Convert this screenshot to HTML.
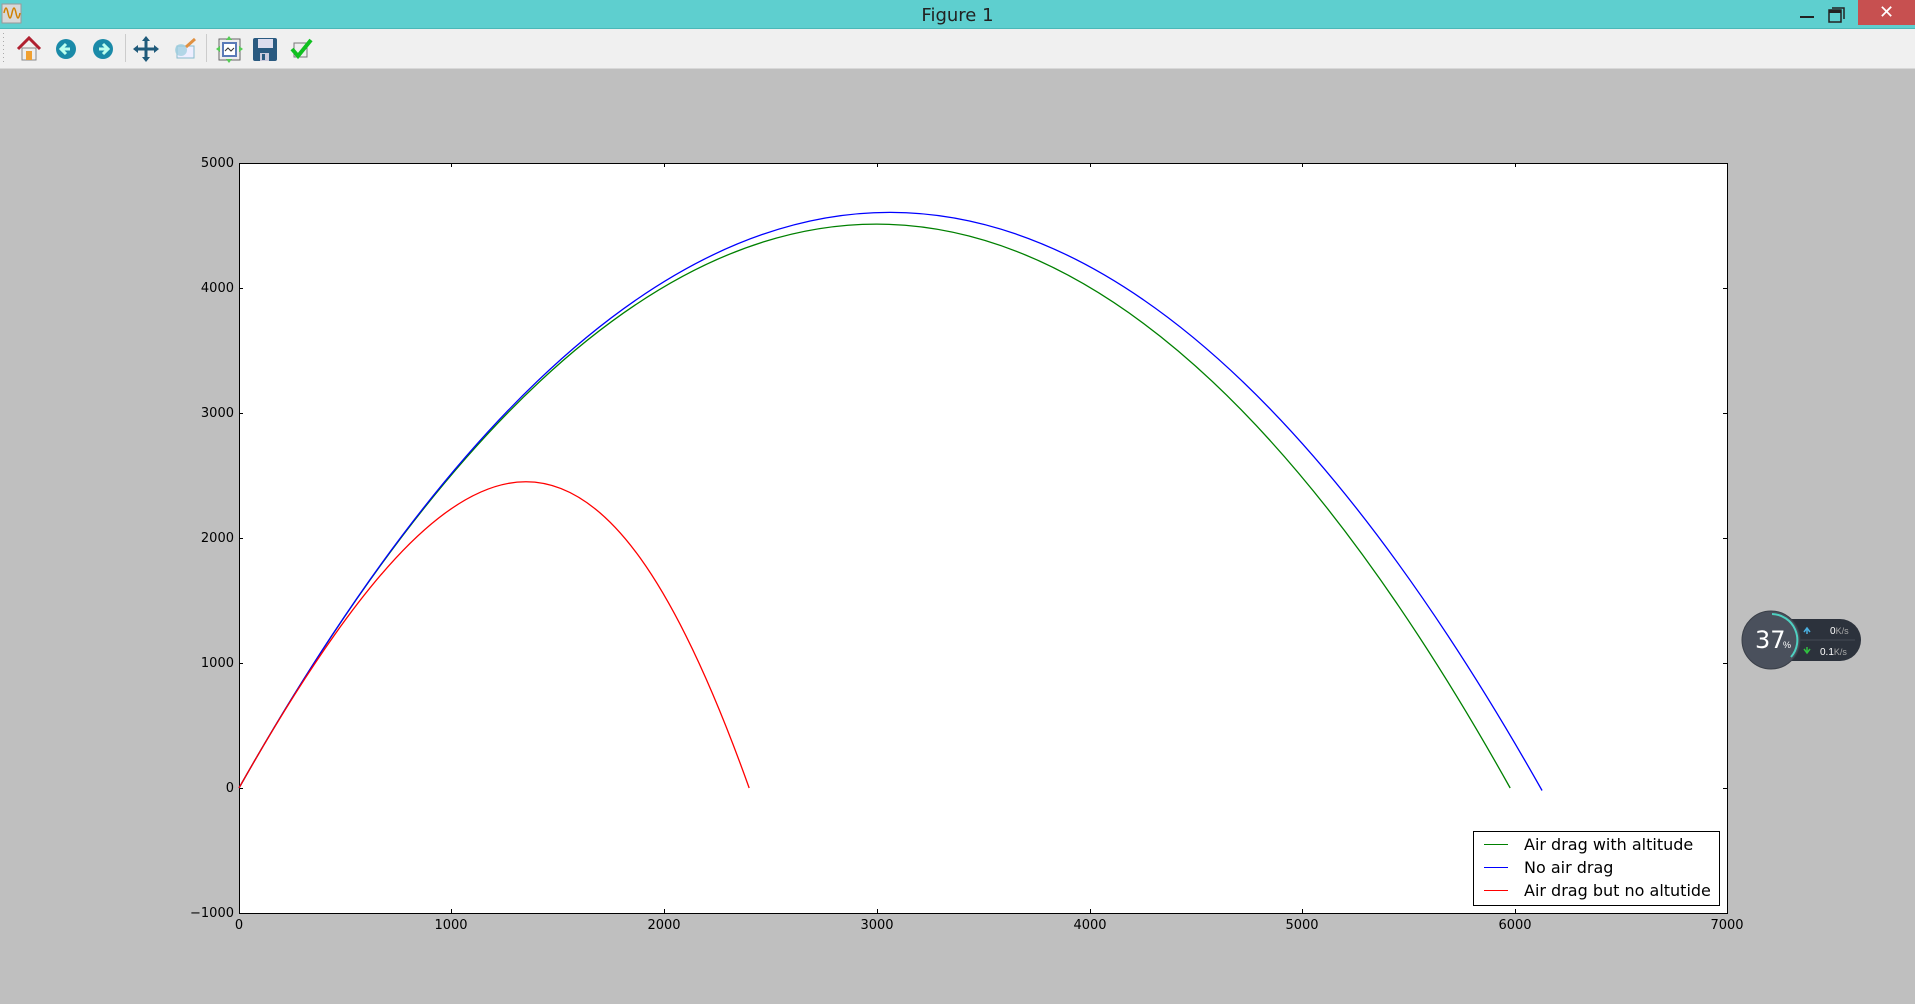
<!DOCTYPE html>
<html><head><meta charset="utf-8">
<style>
html,body{margin:0;padding:0;width:1915px;height:1004px;overflow:hidden;background:#bfbfbf;font-family:"Liberation Sans","DejaVu Sans",sans-serif;}
#title{position:absolute;left:0;top:0;width:1915px;height:28px;background:#5ecfcf;border-bottom:1px solid #4ab8b8;}
#title .t{position:absolute;left:0;width:1915px;top:5px;text-align:center;font-size:18px;color:#222;font-family:"DejaVu Sans","Liberation Sans",sans-serif;}
#close{position:absolute;left:1858px;top:0;width:57px;height:25px;background:#c75050;color:#fff;text-align:center;font-size:18px;line-height:25px;font-weight:bold;}
#tb{position:absolute;left:0;top:29px;width:1915px;height:39px;background:#f0f0f0;border-bottom:1px solid #d8d8d8;}
.lbl{position:absolute;font-size:13px;color:#000;font-family:"DejaVu Sans","Liberation Sans",sans-serif;}
.yl{text-align:right;width:60px;}
.xl{text-align:center;width:60px;}
</style></head><body>
<div id="title"><div class="t">Figure 1</div>
<svg style="position:absolute;left:1;top:3px" width="21" height="22"><rect x="1" y="1" width="19" height="19" fill="#d8d8d8" stroke="#999"/><path d="M3 10 Q5 0 7 10 T11 10 T15 10 T19 10" fill="none" stroke="#d08000" stroke-width="1.5"/></svg>
<svg style="position:absolute;left:1795px;top:3px" width="60" height="22"><rect x="5" y="13" width="14" height="2" fill="#222"/><rect x="34" y="7" width="12" height="12" fill="none" stroke="#222" stroke-width="1.5"/><rect x="34" y="7" width="12" height="3" fill="#222"/><path d="M37 5 H49 V16" fill="none" stroke="#222" stroke-width="1.5"/></svg>
<div id="close">✕</div></div>
<div id="tb">
<svg width="1915" height="39">
<g fill="#aaa"><rect x="3" y="4" width="1" height="1"/><rect x="3" y="8" width="1" height="1"/><rect x="3" y="12" width="1" height="1"/><rect x="3" y="16" width="1" height="1"/><rect x="3" y="20" width="1" height="1"/><rect x="3" y="24" width="1" height="1"/><rect x="3" y="28" width="1" height="1"/><rect x="3" y="32" width="1" height="1"/></g>
<line x1="125.5" y1="5" x2="125.5" y2="33" stroke="#ccc"/><line x1="206.5" y1="5" x2="206.5" y2="33" stroke="#ccc"/>
<path d="M18 20 L29 9 L40 20" fill="none" stroke="#b02030" stroke-width="3"/><rect x="22" y="19" width="14" height="12" fill="#eee" stroke="#888"/><rect x="26" y="22" width="6" height="9" fill="#f0a030"/>
<circle cx="66" cy="20" r="10" fill="#1a8aa8"/><path d="M70 20 H62 M66 15 L61 20 L66 25" stroke="#bfe" stroke-width="3" fill="none"/>
<circle cx="103" cy="20" r="10" fill="#1a8aa8"/><path d="M99 20 H107 M103 15 L108 20 L103 25" stroke="#bfe" stroke-width="3" fill="none"/>
<path d="M146 9 V31 M135 20 H157" stroke="#1f5a7a" stroke-width="3"/><path d="M146 7 L142 12 H150Z M146 33 L142 28 H150Z M133 20 L138 16 V24Z M159 20 L154 16 V24Z" fill="#1f5a7a"/>
<rect x="177" y="17" width="17" height="12" fill="#eef" stroke="#8bc"/><circle cx="181" cy="21" r="6" fill="#9cd" opacity=".7"/><path d="M186 18 L195 10" stroke="#e09040" stroke-width="3"/>
<rect x="219" y="10" width="21" height="21" fill="#eee" stroke="#666"/><rect x="222" y="13" width="15" height="15" fill="#5a7ab8"/><rect x="224" y="15" width="11" height="11" fill="#fff"/><path d="M225 22 L228 19 L231 22 L234 19" stroke="#333" fill="none"/><g fill="#5c5"><path d="M229 7 L226 11 H232Z M229 34 L226 30 H232Z M216 20 L220 17 V23Z M243 20 L239 17 V23Z"/></g>
<rect x="253" y="9" width="24" height="23" rx="2" fill="#2a5a80"/><rect x="258" y="10" width="15" height="9" fill="#dde"/><rect x="260" y="24" width="9" height="8" fill="#ccd"/><rect x="262" y="25" width="3" height="6" fill="#2a5a80"/>
<rect x="294" y="14" width="13" height="14" fill="#eee" stroke="#777"/><path d="M292 20 L298 27 L311 11" stroke="#10c020" stroke-width="4" fill="none"/>
</svg></div>

<svg style="position:absolute;left:0;top:0" width="1915" height="1004">
<rect x="239.5" y="163.5" width="1488" height="750" fill="#fff" stroke="#000" stroke-width="1"/>
<g stroke="#000" stroke-width="1">
<path d="M451.5 163V167 M664.5 163V167 M877.5 163V167 M1090.5 163V167 M1302.5 163V167 M1515.5 163V167 M451.5 913V909 M664.5 913V909 M877.5 913V909 M1090.5 913V909 M1302.5 913V909 M1515.5 913V909"/>
<path d="M239 788.5H243 M239 663.5H243 M239 538.5H243 M239 413.5H243 M239 288.5H243 M1727 788.5H1723 M1727 663.5H1723 M1727 538.5H1723 M1727 413.5H1723 M1727 288.5H1723"/>
</g>
<g transform="translate(239,788) scale(0.212571,-0.125)" fill="none" stroke-width="1.3">
<path vector-effect="non-scaling-stroke" d="M0 0 C2000 6016 4007 6013 5980 0" stroke="#008000"/>
<path vector-effect="non-scaling-stroke" d="M0 0 Q3065 9220 6130 -20" stroke="#0000ff"/>
<path vector-effect="non-scaling-stroke" d="M0 0 C1086 3267 1714 3267 2400 0" stroke="#ff0000"/>
</g>
<rect x="1473.5" y="831.5" width="246" height="74" fill="#fff" stroke="#000"/>
<path d="M1484 844.5H1508" stroke="#008000"/><path d="M1484 867.5H1508" stroke="#0000ff"/><path d="M1484 890.5H1508" stroke="#ff0000"/>
<g font-family="DejaVu Sans, Liberation Sans, sans-serif" font-size="16" fill="#000">
<text x="1524" y="850">Air drag with altitude</text><text x="1524" y="873">No air drag</text><text x="1524" y="896">Air drag but no altutide</text></g>
<rect x="1770" y="619" width="91" height="42" rx="21" fill="#2c323c"/>
<line x1="1800" y1="640" x2="1855" y2="640" stroke="#444a55"/>
<circle cx="1771" cy="640" r="29" fill="#4a505c" stroke="#3a3f48"/>
<path d="M1772 614 A26 26 0 0 1 1791 657" fill="none" stroke="#4ed0c0" stroke-width="2"/>
<text x="1755" y="648" font-size="24" fill="#fff" font-family="DejaVu Sans, sans-serif">37</text><text x="1783" y="648" font-size="9" fill="#fff">%</text>
<path d="M1807 634 V629 M1804 632 L1807 628 L1810 632" stroke="#4ab0e0" stroke-width="1.5" fill="none"/>
<path d="M1807 647 V652 M1804 649 L1807 653 L1810 649" stroke="#30c040" stroke-width="1.5" fill="none"/>
<text x="1830" y="634" font-size="10" fill="#fff">0<tspan fill="#aaa" font-size="9">K/s</tspan></text>
<text x="1820" y="655" font-size="10" fill="#fff">0.1<tspan fill="#aaa" font-size="9">K/s</tspan></text>
</svg>
<div class="lbl yl" style="left:174px;top:156px">5000</div>
<div class="lbl yl" style="left:174px;top:281px">4000</div>
<div class="lbl yl" style="left:174px;top:406px">3000</div>
<div class="lbl yl" style="left:174px;top:531px">2000</div>
<div class="lbl yl" style="left:174px;top:656px">1000</div>
<div class="lbl yl" style="left:174px;top:781px">0</div>
<div class="lbl yl" style="left:174px;top:906px">−1000</div>
<div class="lbl xl" style="left:209px;top:918px">0</div>
<div class="lbl xl" style="left:421px;top:918px">1000</div>
<div class="lbl xl" style="left:634px;top:918px">2000</div>
<div class="lbl xl" style="left:847px;top:918px">3000</div>
<div class="lbl xl" style="left:1060px;top:918px">4000</div>
<div class="lbl xl" style="left:1272px;top:918px">5000</div>
<div class="lbl xl" style="left:1485px;top:918px">6000</div>
<div class="lbl xl" style="left:1697px;top:918px">7000</div>
</body></html>
